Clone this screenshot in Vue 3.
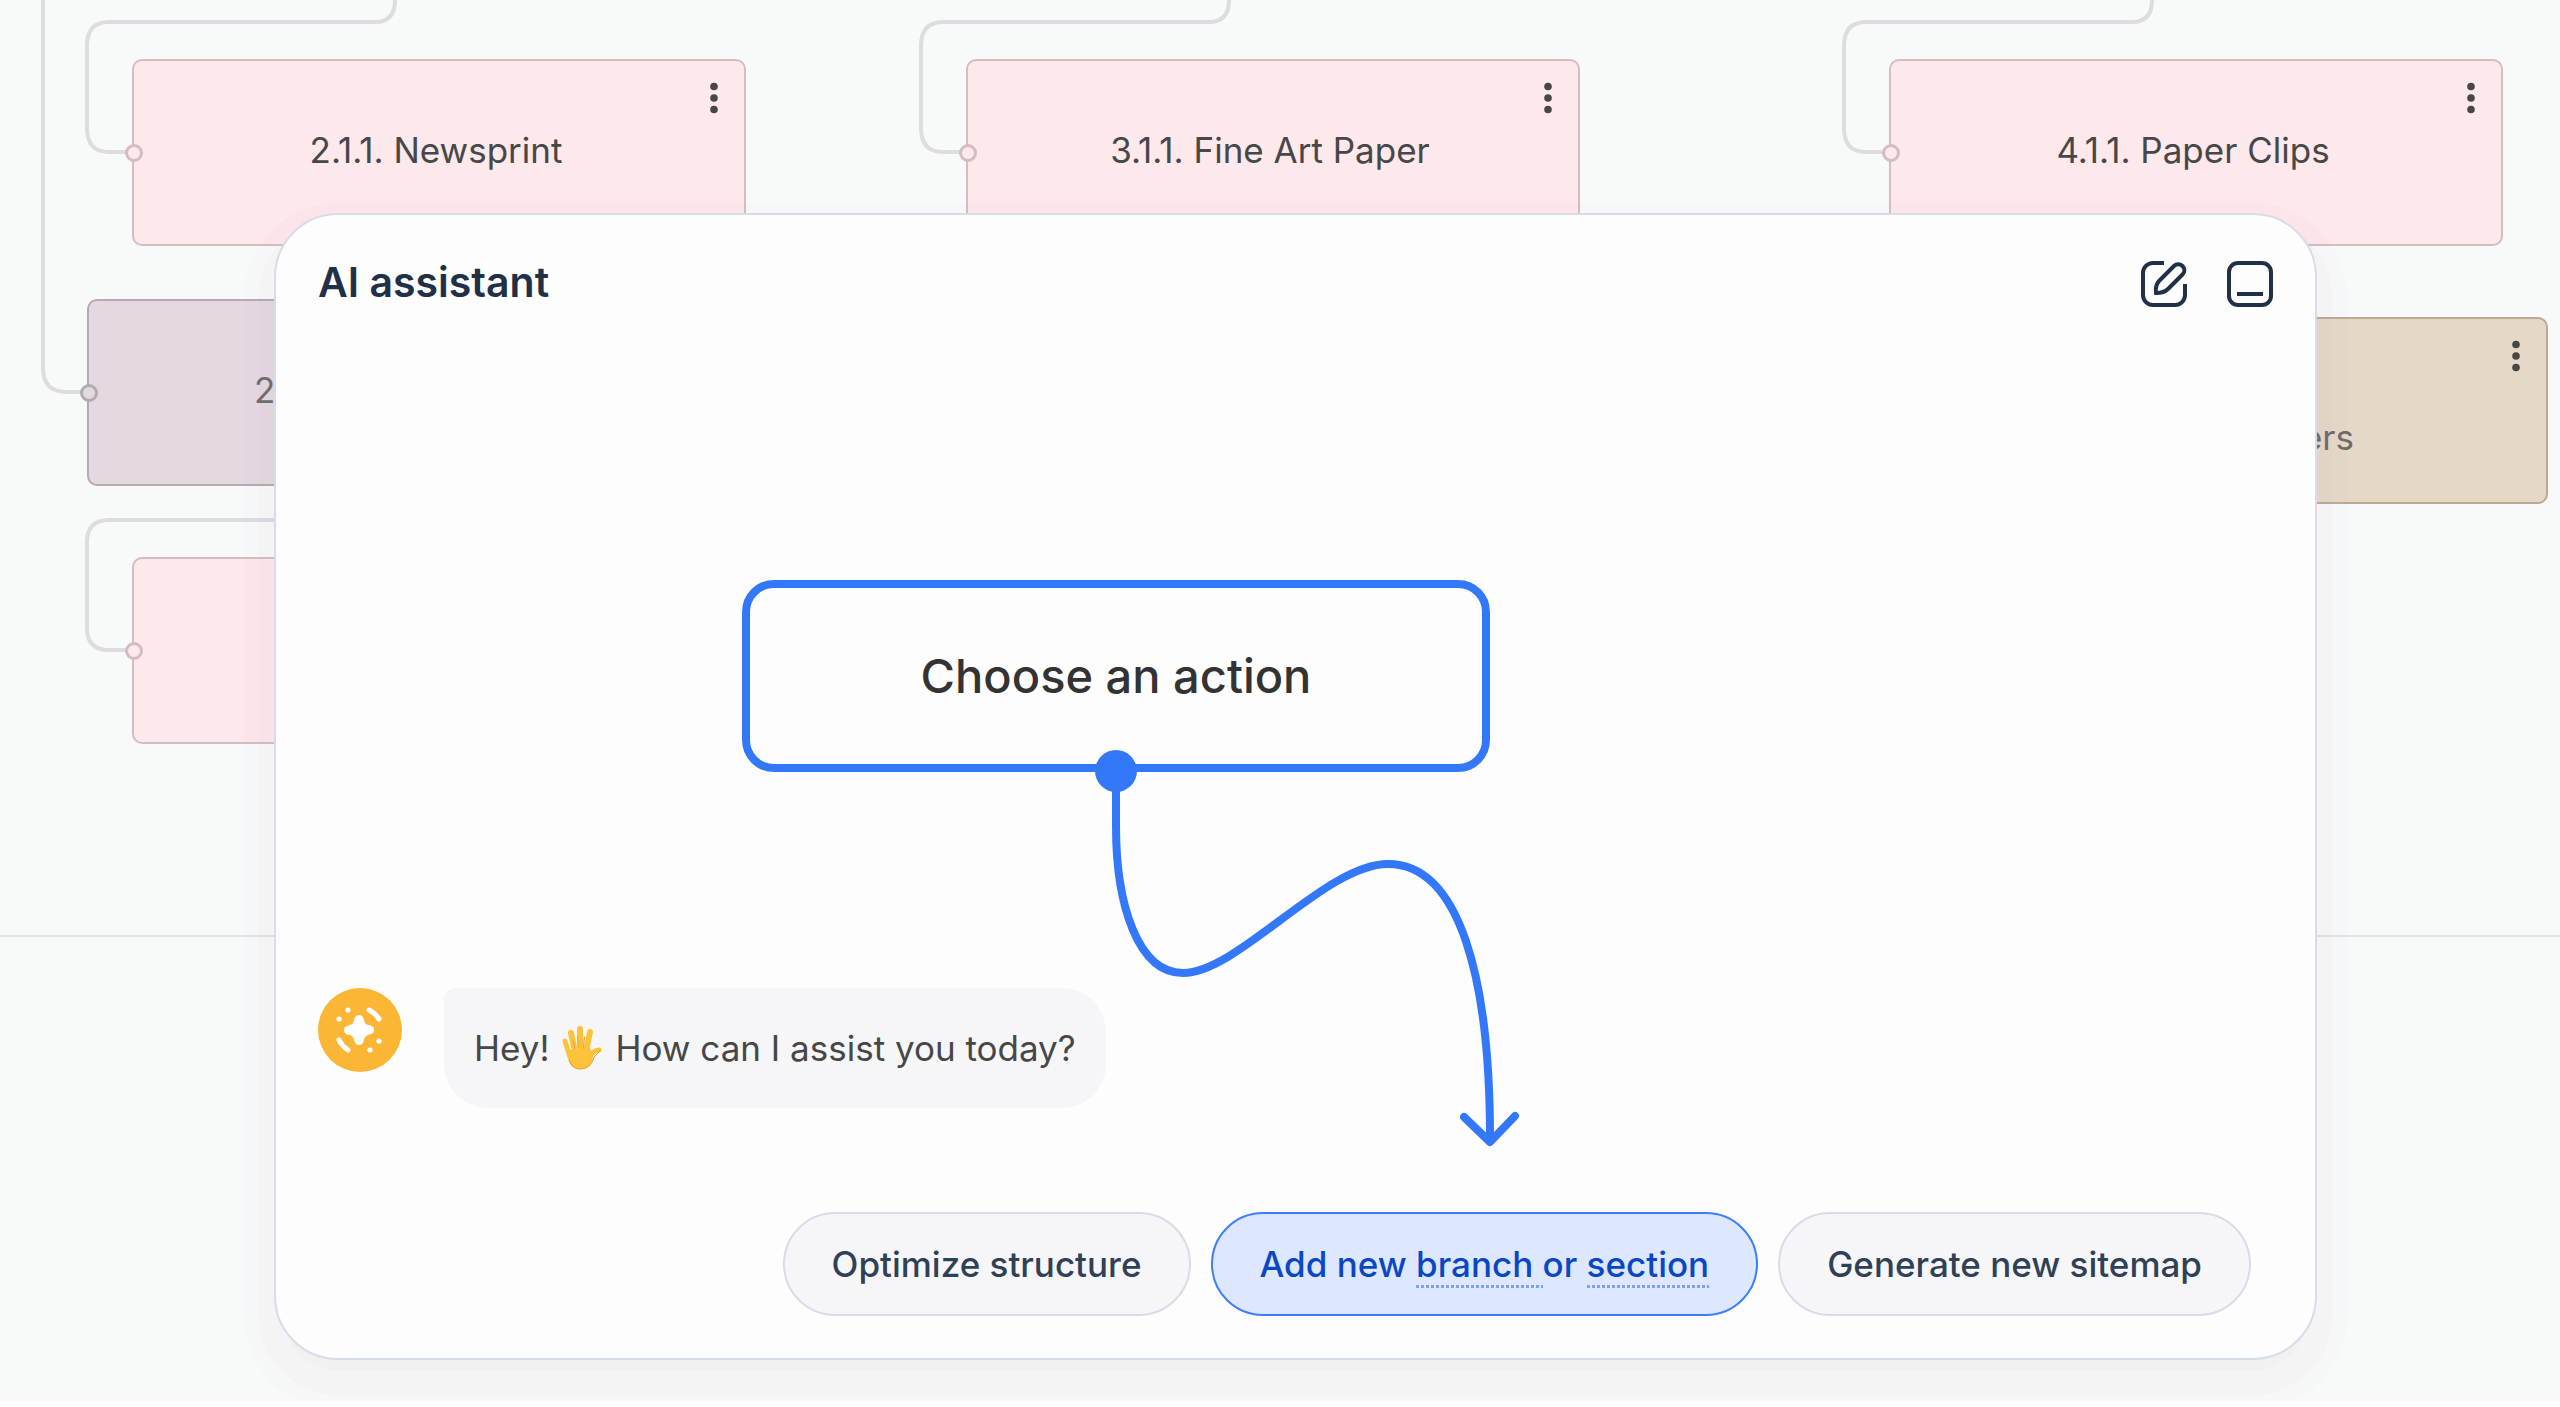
<script setup>
const cards = [
  { id: 'newsprint', label: '2.1.1. Newsprint', x: 132, y: 59, tone: 'pink', port: true, menu: true },
  { id: 'fine-art', label: '3.1.1. Fine Art Paper', x: 966, y: 59, tone: 'pink', port: true, menu: true },
  { id: 'clips', label: '4.1.1. Paper Clips', x: 1889, y: 59, tone: 'pink', port: true, menu: true },
  { id: 'second', label: '2', x: 87, y: 299, tone: 'mauve', align: 'start', port: true },
  { id: 'third', label: '', x: 132, y: 557, tone: 'pink', port: true },
  { id: 'organizers', label: 'ers', x: 1934, y: 317, tone: 'tan', align: 'end', menu: true },
]

const connectors = [
  'M43 0V368Q43 392 67 392H82',
  'M395 0Q395 22 375 22H109Q87 22 87 46V128Q87 152 109 152H126',
  'M1229 0Q1229 22 1209 22H943Q921 22 921 46V128Q921 152 943 152H960',
  'M2152 0Q2152 22 2132 22H1866Q1844 22 1844 46V128Q1844 152 1866 152H1883',
  'M395 520H109Q87 520 87 542V628Q87 650 109 650H126',
]
</script>

<template>
  <div class="board">
    <div class="canvas">
      <div class="divider"></div>
      <svg class="connectors" width="2560" height="760" aria-hidden="true">
        <path v-for="d in connectors" :key="d" :d="d" />
      </svg>
      <article
        v-for="card in cards"
        :key="card.id"
        class="card"
        :class="[card.tone, card.align]"
        :style="{ left: card.x + 'px', top: card.y + 'px' }"
      >
        <span v-if="card.port" class="port"></span>
        <span class="card-label">{{ card.label }}</span>
        <button v-if="card.menu" class="card-menu" type="button" aria-label="Card menu">
          <svg width="8" height="32" viewBox="0 0 8 32">
            <circle cx="4" cy="4.500" r="3.800" /><circle cx="4" cy="16" r="3.800" /><circle cx="4" cy="27.500" r="3.800" />
          </svg>
        </button>
      </article>
    </div>

    <section class="panel" aria-labelledby="panel-title">
      <header class="panel-head">
        <h1 id="panel-title">AI assistant</h1>
        <div class="tools">
          <button type="button" aria-label="New chat">
            <svg width="46" height="46" viewBox="0 0 46 46">
              <path d="M23 2H12A10 10 0 0 0 2 12V34A10 10 0 0 0 12 44H34A10 10 0 0 0 44 34V23" />
              <path d="M15 32C14 27 16 22 18 20L33 5C35.500 2.500 39 2.500 41.500 5S44 11 41.500 13.500L27 28C24 31 20 32 15 32Z" />
            </svg>
          </button>
          <button type="button" aria-label="Minimize">
            <svg width="46" height="46" viewBox="0 0 46 46">
              <rect x="2" y="2" width="42" height="42" rx="9" />
              <path d="M10 33H36" />
            </svg>
          </button>
        </div>
      </header>

      <div class="prompt">
        Choose an action
        <svg class="arrow" width="430" height="410" viewBox="0 0 430 410" aria-hidden="true">
          <circle cx="22" cy="22" r="21" />
          <path d="M22 22V77C22 156 44 224 89 224C144 224 231 115 294 115C366 115 396 230 396 389" />
          <path d="M370 368L396 393L421 367" />
        </svg>
      </div>

      <div class="message">
        <svg class="avatar" width="84" height="84" viewBox="0 0 84 84" aria-hidden="true">
          <circle cx="42" cy="42" r="42" fill="#fbb636" />
          <path d="M41 27C44 27 45.500 29 46 33Q47 36 50 37C54 37.500 56 39 56 42S54 46 50 47Q47 48 46 51C45.500 55 44 57 41 57S36.500 55 36 51Q35 48 32 47C28 46.500 26 45 26 42S28 38 32 37Q35 36 36 33C36.500 29 38 27 41 27Z" fill="#fff" />
          <g fill="#fff">
            <circle cx="30" cy="22" r="2.600" /><circle cx="21" cy="31" r="2.600" />
            <circle cx="61" cy="53" r="2.600" /><circle cx="52" cy="62" r="2.600" />
          </g>
          <path d="M51 22Q57 25 61 31M21 52Q24 58 30 62" fill="none" stroke="#fff" stroke-width="5" stroke-linecap="round" />
        </svg>
        <p class="bubble">
          <span>Hey!</span>
          <svg width="42" height="44" viewBox="0 0 42 44" role="img" aria-label="Raised hand">
            <g fill="none" stroke="#fdc23c" stroke-linecap="round" stroke-linejoin="round">
              <path d="M4 15L9 31" stroke-width="5" />
              <path d="M10 7L14 26" stroke-width="6" />
              <path d="M19 3L20 26" stroke-width="6" />
              <path d="M29 6L25 26" stroke-width="6" />
              <path d="M38 24Q32 24 27 33" stroke-width="5" />
            </g>
            <path d="M7 24L29 22L32 29C32 38 27 43 19 43C11 43 8 38 7 31Z" fill="#fdc23c" />
            <path d="M8 34C10 40 14 43 19 43C26 43 31 39 33 31L39 25" fill="none" stroke="#e8982e" stroke-width="1" stroke-linecap="round" />
            <path d="M12 14L14 23M16.500 10L17 22M23.500 11L22.500 22" fill="none" stroke="#efa52f" stroke-width="1" stroke-linecap="round" />
          </svg>
          <span>How can I assist you today?</span>
        </p>
      </div>

      <div class="actions">
        <button type="button">Optimize structure</button>
        <button type="button" class="active">Add new <span class="term">branch&nbsp;</span>or <span class="term">section</span></button>
        <button type="button">Generate new sitemap</button>
      </div>
    </section>
  </div>
</template>

<style>
body {
  background: #fff;
}
</style>

<style scoped>
.board {
  position: relative;
  display: flex;
  box-sizing: border-box;
  min-height: calc(100vh - 6px);
  padding: 213px 243px 41px 274px;
  overflow: hidden;
  background: #f8faf9;
  color: #474747;
  font-family: Inter, "Liberation Sans", sans-serif;
  font-size: 35px;
  line-height: 52px;
}
.board * {
  box-sizing: border-box;
}
button {
  padding: 0;
  border: 0;
  background: none;
  color: inherit;
  font: inherit;
  cursor: pointer;
}
svg {
  display: block;
}

.canvas {
  position: absolute;
  inset: 0;
}
.divider {
  position: absolute;
  top: 935px;
  width: 100%;
  height: 2px;
  background: #dfe2e3;
}
.connectors {
  position: absolute;
  fill: none;
  stroke: #dcdce1;
  stroke-width: 4px;
}
.card {
  position: absolute;
  display: flex;
  align-items: center;
  justify-content: center;
  width: 614px;
  height: 187px;
  padding: 0 6px 6px 0;
  border: 2px solid #d3bdc2;
  border-radius: 10px;
  background: #fde8ec;
}
.mauve {
  border-color: #b3abb1;
  background: #e4d9e1;
}
.tan {
  border-color: #bbaa93;
  background: #e5d8c7;
}
.start {
  justify-content: flex-start;
  padding-left: 165px;
}
.end {
  align-items: flex-end;
  justify-content: flex-end;
  padding: 0 192px 39px 0;
}
.start .card-label,
.end .card-label {
  opacity: 0.75;
}
.port {
  position: absolute;
  top: 83px;
  left: -9px;
  width: 18px;
  height: 18px;
  border: 3px solid;
  border-color: inherit;
  border-radius: 50%;
  background: inherit;
}
.card-menu {
  position: absolute;
  top: 21px;
  right: 26px;
  fill: #474747;
}

.panel {
  position: relative;
  display: flex;
  flex: 1;
  flex-direction: column;
  padding: 46px 42px 42px;
  border: 2px solid #d8dce8;
  border-radius: 64px;
  background: #fdfdfe;
  box-shadow:
    0 20px 0 -10px rgba(120, 100, 140, 0.02),
    0 20px 0 15px rgba(130, 120, 120, 0.02),
    0 20px 0 30px rgba(200, 160, 220, 0.03);
}
.panel-head {
  display: flex;
  align-items: center;
  justify-content: space-between;
  height: 46px;
}
h1 {
  margin: 0;
  padding-bottom: 4px;
  color: #1f3047;
  font-size: 41px;
  font-weight: 600;
}
.tools {
  display: flex;
  gap: 40px;
  fill: none;
  stroke: #1f3047;
  stroke-width: 4px;
}

.prompt {
  position: relative;
  display: flex;
  align-items: center;
  justify-content: center;
  width: 748px;
  height: 192px;
  margin: auto 783px 0 auto;
  border: 8px solid #3478fa;
  border-radius: 32px;
  color: #333;
  font-size: 47px;
  font-weight: 500;
}
.arrow {
  position: absolute;
  top: 161px;
  left: 344px;
  fill: none;
  stroke: #3478fa;
  stroke-width: 8px;
  stroke-linecap: round;
  stroke-linejoin: round;
}
.arrow circle {
  fill: #3478fa;
  stroke: none;
}

.message {
  display: flex;
  gap: 42px;
  margin-top: 216px;
}
.bubble {
  display: flex;
  align-items: center;
  gap: 12px;
  height: 120px;
  margin: 0;
  padding: 0 30px;
  border-radius: 12px 44px 44px 44px;
  background: #f6f6f8;
}

.actions {
  display: flex;
  justify-content: flex-end;
  gap: 20px;
  margin-top: 104px;
  padding-right: 22px;
}
.actions button {
  height: 104px;
  padding: 0 47px;
  border: 2px solid #d8dce8;
  border-radius: 52px;
  background: #f6f6f9;
  color: #2f4156;
  font-weight: 500;
}
.actions .active {
  border-color: #3d7eff;
  background: #dde7ff;
  color: #0a47c4;
}
.term {
  padding-bottom: 3px;
  background: repeating-linear-gradient(90deg, #7fa2ef 0 3px, transparent 3px 5px) left bottom / 100% 3px no-repeat;
}
</style>
